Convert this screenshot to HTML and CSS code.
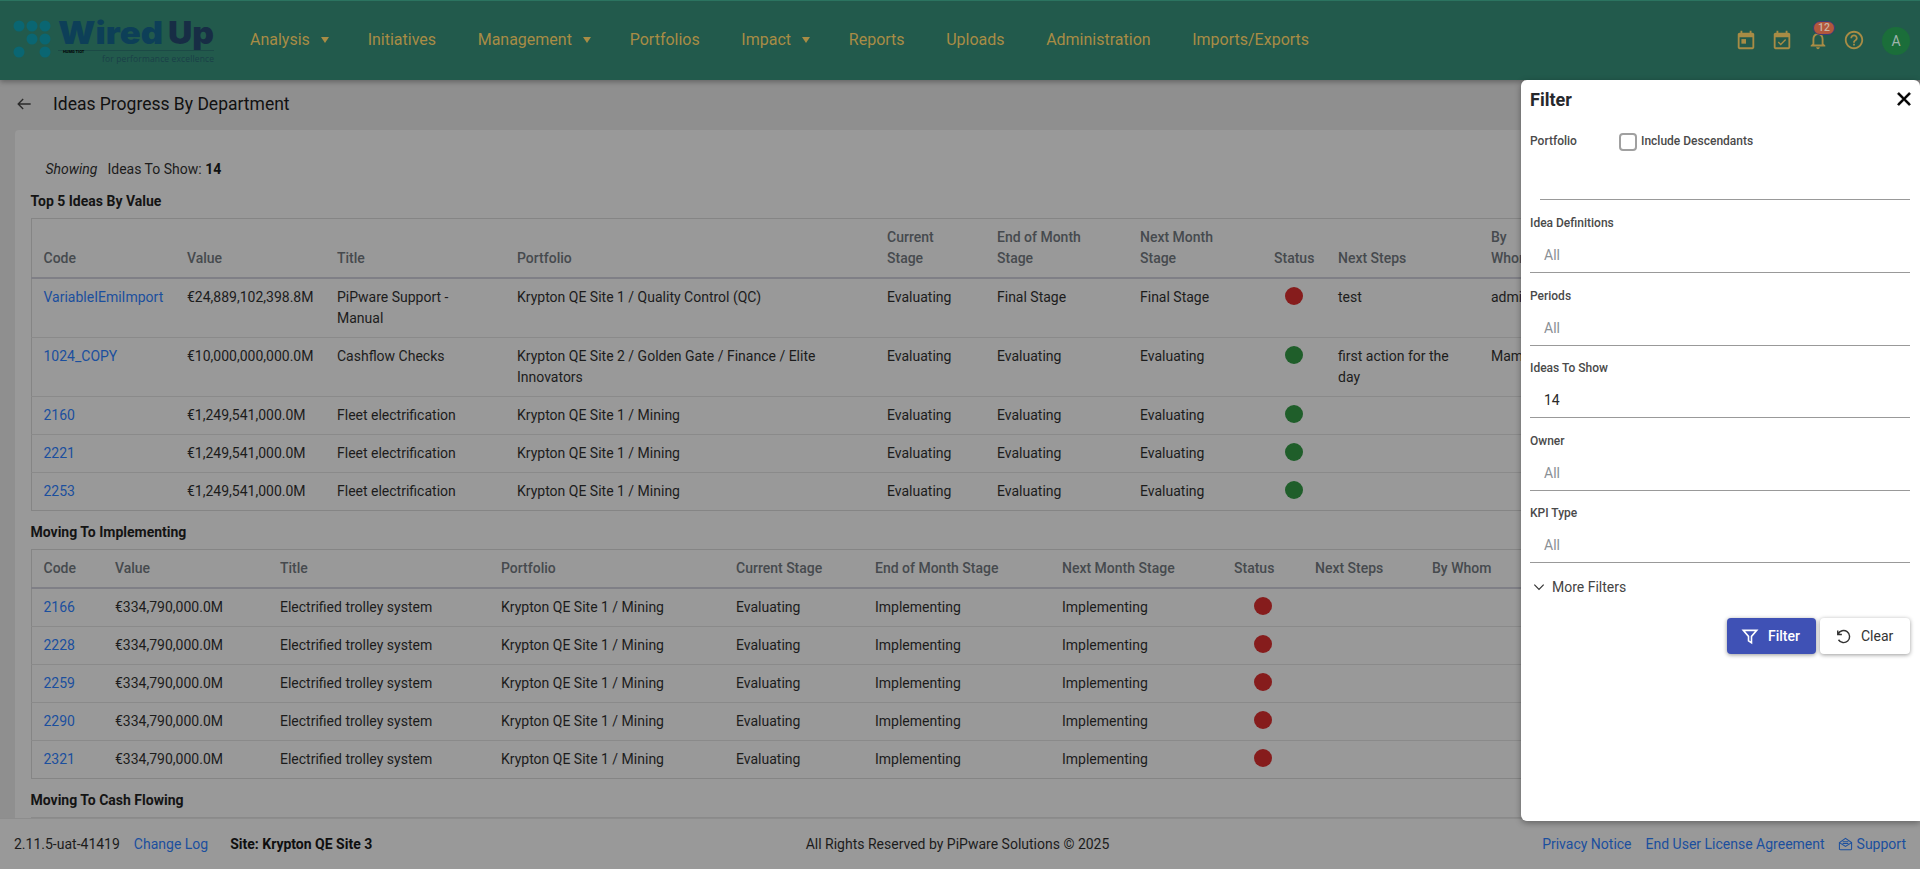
FILE: index.html
```html
<!DOCTYPE html>
<html lang="en">
<head>
<meta charset="utf-8">
<title>Ideas Progress By Department</title>
<link rel="stylesheet" href="styles.css">
</head>
<body>
<header class="topbar">
  <svg class="logo" width="229" height="80" viewBox="0 0 229 80" aria-label="WiredUp">
    <g class="logo-dots">
      <circle cx="19" cy="26" r="5.5"/><circle cx="32" cy="26" r="5.5"/><circle cx="45" cy="26" r="5.5"/>
      <circle cx="32" cy="39" r="5.5"/><circle cx="45" cy="39" r="5.5"/>
      <circle cx="19" cy="52" r="5.5"/><circle cx="45" cy="52" r="5.5"/>
    </g>
    <text class="logo-wired" x="58" y="44" textLength="105" lengthAdjust="spacingAndGlyphs">Wired</text>
    <text class="logo-up" x="168" y="44" textLength="46" lengthAdjust="spacingAndGlyphs">Up</text>
    <rect class="logo-rule" x="58" y="50" width="156" height="1"/>
    <text class="logo-micro" x="63" y="53">HUMG TIOT</text>
    <text class="logo-tag" x="102" y="62" textLength="112">for performance excellence</text>
  </svg>
  <nav class="nav">
    <a class="nav-item has-menu">Analysis<i class="caret"></i></a>
    <a class="nav-item">Initiatives</a>
    <a class="nav-item has-menu">Management<i class="caret"></i></a>
    <a class="nav-item">Portfolios</a>
    <a class="nav-item has-menu">Impact<i class="caret"></i></a>
    <a class="nav-item">Reports</a>
    <a class="nav-item">Uploads</a>
    <a class="nav-item">Administration</a>
    <a class="nav-item">Imports/Exports</a>
  </nav>
  <div class="tools">
    <svg class="tool" viewBox="0 0 24 24"><path d="M19 4h-1V2h-2v2H8V2H6v2H5C3.9 4 3 4.9 3 6v14c0 1.1.9 2 2 2h14c1.1 0 2-.9 2-2V6c0-1.1-.9-2-2-2zm0 16H5V9h14v11z"/><rect x="7" y="11" width="5" height="5"/></svg>
    <svg class="tool" viewBox="0 0 24 24"><path d="M16.53 12.06L15.47 11l-4.88 4.88-2.12-2.12-1.06 1.06L10.59 18l5.94-5.94zM19 4h-1V2h-2v2H8V2H6v2H5C3.9 4 3 4.9 3 6v14c0 1.1.9 2 2 2h14c1.1 0 2-.9 2-2V6c0-1.1-.9-2-2-2zm0 16H5V9h14v11z"/></svg>
    <span class="bell">
      <svg class="tool" viewBox="0 0 24 24"><path d="M12 22c1.1 0 2-.9 2-2h-4c0 1.1.9 2 2 2zm6-6v-5c0-3.07-1.63-5.64-4.5-6.32V4c0-.83-.67-1.5-1.5-1.5s-1.5.67-1.5 1.5v.68C7.64 5.36 6 7.92 6 11v5l-2 2v1h16v-1l-2-2zm-2 1H8v-6c0-2.48 1.51-4.5 4-4.5s4 2.02 4 4.5v6z"/></svg>
      <b class="badge">12</b>
    </span>
    <svg class="tool" viewBox="0 0 24 24"><path d="M11 18h2v-2h-2v2zm1-16C6.48 2 2 6.48 2 12s4.48 10 10 10 10-4.48 10-10S17.52 2 12 2zm0 18c-4.41 0-8-3.59-8-8s3.59-8 8-8 8 3.59 8 8-3.59 8-8 8zm0-14c-2.21 0-4 1.79-4 4h2c0-1.1.9-2 2-2s2 .9 2 2c0 2-3 1.75-3 5h2c0-2.25 3-2.5 3-5 0-2.21-1.79-4-4-4z"/></svg>
    <span class="avatar">A</span>
  </div>
</header>

<main class="main">
  <div class="page-head">
    <svg class="back" viewBox="0 0 24 24"><path d="M20 12H5M11 6l-6 6 6 6"/></svg>
    <h1 class="page-title">Ideas Progress By Department</h1>
  </div>
  <section class="card">
    <p class="showing"><em>Showing</em><span>Ideas To Show: <b>14</b></span></p>

    <h2 class="section-title">Top 5 Ideas By Value</h2>
    <table class="grid">
      <colgroup><col class="a1"><col class="a2"><col class="a3"><col class="a4"><col class="a5"><col class="a6"><col class="a7"><col class="a8"><col class="a9"><col class="a10"><col></colgroup>
      <thead><tr><th>Code</th><th>Value</th><th>Title</th><th>Portfolio</th><th>Current Stage</th><th>End of Month Stage</th><th>Next Month Stage</th><th>Status</th><th>Next Steps</th><th>By Whom</th><th></th></tr></thead>
      <tbody>
        <tr><td><a>VariableIEmiImport</a></td><td>€24,889,102,398.8M</td><td>PiPware Support - Manual</td><td>Krypton QE Site 1 / Quality Control (QC)</td><td>Evaluating</td><td>Final Stage</td><td>Final Stage</td><td><i class="dot red"></i></td><td>test</td><td>admin</td><td></td></tr>
        <tr><td><a>1024_COPY</a></td><td>€10,000,000,000.0M</td><td>Cashflow Checks</td><td>Krypton QE Site 2 / Golden Gate / Finance / Elite Innovators</td><td>Evaluating</td><td>Evaluating</td><td>Evaluating</td><td><i class="dot green"></i></td><td>first action for the day</td><td>Mamta</td><td></td></tr>
        <tr><td><a>2160</a></td><td>€1,249,541,000.0M</td><td>Fleet electrification</td><td>Krypton QE Site 1 / Mining</td><td>Evaluating</td><td>Evaluating</td><td>Evaluating</td><td><i class="dot green"></i></td><td></td><td></td><td></td></tr>
        <tr><td><a>2221</a></td><td>€1,249,541,000.0M</td><td>Fleet electrification</td><td>Krypton QE Site 1 / Mining</td><td>Evaluating</td><td>Evaluating</td><td>Evaluating</td><td><i class="dot green"></i></td><td></td><td></td><td></td></tr>
        <tr><td><a>2253</a></td><td>€1,249,541,000.0M</td><td>Fleet electrification</td><td>Krypton QE Site 1 / Mining</td><td>Evaluating</td><td>Evaluating</td><td>Evaluating</td><td><i class="dot green"></i></td><td></td><td></td><td></td></tr>
      </tbody>
    </table>

    <h2 class="section-title">Moving To Implementing</h2>
    <table class="grid">
      <colgroup><col class="b1"><col class="b2"><col class="b3"><col class="b4"><col class="b5"><col class="b6"><col class="b7"><col class="b8"><col class="b9"><col></colgroup>
      <thead><tr><th>Code</th><th>Value</th><th>Title</th><th>Portfolio</th><th>Current Stage</th><th>End of Month Stage</th><th>Next Month Stage</th><th>Status</th><th>Next Steps</th><th>By Whom</th></tr></thead>
      <tbody>
        <tr><td><a>2166</a></td><td>€334,790,000.0M</td><td>Electrified trolley system</td><td>Krypton QE Site 1 / Mining</td><td>Evaluating</td><td>Implementing</td><td>Implementing</td><td><i class="dot red"></i></td><td></td><td></td></tr>
        <tr><td><a>2228</a></td><td>€334,790,000.0M</td><td>Electrified trolley system</td><td>Krypton QE Site 1 / Mining</td><td>Evaluating</td><td>Implementing</td><td>Implementing</td><td><i class="dot red"></i></td><td></td><td></td></tr>
        <tr><td><a>2259</a></td><td>€334,790,000.0M</td><td>Electrified trolley system</td><td>Krypton QE Site 1 / Mining</td><td>Evaluating</td><td>Implementing</td><td>Implementing</td><td><i class="dot red"></i></td><td></td><td></td></tr>
        <tr><td><a>2290</a></td><td>€334,790,000.0M</td><td>Electrified trolley system</td><td>Krypton QE Site 1 / Mining</td><td>Evaluating</td><td>Implementing</td><td>Implementing</td><td><i class="dot red"></i></td><td></td><td></td></tr>
        <tr><td><a>2321</a></td><td>€334,790,000.0M</td><td>Electrified trolley system</td><td>Krypton QE Site 1 / Mining</td><td>Evaluating</td><td>Implementing</td><td>Implementing</td><td><i class="dot red"></i></td><td></td><td></td></tr>
      </tbody>
    </table>

    <h2 class="section-title">Moving To Cash Flowing</h2>
    <table class="grid"><tbody><tr><td>&nbsp;</td></tr></tbody></table>
  </section>
</main>

<footer class="footer">
  <div class="foot-left"><span>2.11.5-uat-41419</span><a>Change Log</a><b>Site: Krypton QE Site 3</b></div>
  <div class="foot-center">All Rights Reserved by PiPware Solutions © 2025</div>
  <div class="foot-right">
    <a>Privacy Notice</a><a>End User License Agreement</a>
    <a class="support"><svg viewBox="0 0 16 16"><path d="M1.500 6.500 8 2l6.500 4.500V13a1.200 1.200 0 0 1-1.200 1.200H2.700A1.200 1.200 0 0 1 1.500 13zM1.500 6.500 8 10.500l6.500-4M5 5.500h6M5 7.500h6"/></svg>Support</a>
  </div>
</footer>

<aside class="drawer">
  <div class="drawer-head">
    <h2 class="drawer-title">Filter</h2>
    <svg class="close" viewBox="0 0 24 24"><path d="M19 6.410 17.590 5 12 10.590 6.410 5 5 6.410 10.590 12 5 17.590 6.410 19 12 13.410 17.590 19 19 17.590 13.410 12z"/></svg>
  </div>
  <div class="portfolio-row">
    <label class="field-label">Portfolio</label>
    <span class="check"><i class="box"></i>Include Descendants</span>
  </div>
  <div class="portfolio-input"></div>
  <div class="field"><label class="field-label">Idea Definitions</label><div class="field-value">All</div></div>
  <div class="field"><label class="field-label">Periods</label><div class="field-value">All</div></div>
  <div class="field"><label class="field-label">Ideas To Show</label><div class="field-value filled">14</div></div>
  <div class="field"><label class="field-label">Owner</label><div class="field-value">All</div></div>
  <div class="field"><label class="field-label">KPI Type</label><div class="field-value">All</div></div>
  <div class="more"><svg viewBox="0 0 24 24"><path d="M5 8.500l7 7 7-7"/></svg>More Filters</div>
  <div class="actions">
    <button class="btn primary"><svg viewBox="0 0 24 24"><path d="M3 4.500h18l-7 8V21l-4-2.500v-6z"/></svg>Filter</button>
    <button class="btn"><svg viewBox="0 0 24 24"><path d="M5.500 9.500A8 8 0 1 1 6 17M5 4.500v5.500h5.500"/></svg>Clear</button>
  </div>
</aside>
</body>
</html>
```
FILE: styles.css
```css
* { box-sizing: border-box; }
html, body { height: 100%; }
body {
  margin: 0;
  height: 869px;
  overflow: hidden;
  display: flex;
  flex-direction: column;
  font: 14px/21px Roboto, "Liberation Sans", sans-serif;
  color: #1c1c1c;
  background: #8f8f8f;
}
a { color: #1b4f9e; }

/* top bar */
.topbar {
  flex: none;
  height: 80px;
  display: flex;
  align-items: center;
  background: #225a4c;
  border-top: 1px solid #2b7460;
  box-shadow: 0 2px 5px rgba(0,0,0,.3);
  position: relative;
  z-index: 2;
}
.logo { flex: none; margin-top: -1px; }
.logo-dots { fill: #0a6672; }
.logo-wired { font: 900 31px Inter, Roboto, sans-serif; fill: #0d3f58; }
.logo-up { font: 900 31px Inter, Roboto, sans-serif; fill: #172d45; }
.logo-rule { fill: #1c4a46; }
.logo-micro { font: 700 4px Roboto, sans-serif; fill: #000; }
.logo-tag { font: 400 8.500px "Open Sans", Roboto, sans-serif; fill: #1a4048; }
.nav { display: flex; align-items: center; margin-bottom: 2px; }
.nav-item {
  display: flex;
  align-items: center;
  padding: 0 20.800px;
  font-size: 16px;
  color: #a88c45;
}
.nav-item:first-child { padding-left: 21px; }
.nav-item.has-menu { padding-right: 18px; }
.caret {
  width: 0;
  height: 0;
  margin-left: 11px;
  border-left: 4.500px solid transparent;
  border-right: 4.500px solid transparent;
  border-top: 6px solid #a88c45;
}
.tools { margin-left: auto; margin-right: 10px; display: flex; align-items: center; gap: 14px; }
.tool { display: block; width: 22px; height: 22px; fill: #a88c45; margin-bottom: 2px; }
.bell { position: relative; display: block; }
.badge {
  position: absolute;
  left: 6px;
  top: -8px;
  width: 22px;
  height: 14px;
  border: 1px solid #3d3a78;
  border-radius: 7px;
  background: #b3573c;
  color: #c9b5a5;
  font: 500 10.500px/12px Roboto, sans-serif;
  text-align: center;
}
.avatar {
  width: 28px;
  height: 28px;
  margin-left: 3px;
  border-radius: 50%;
  background: #1b6e3a;
  color: #9fb3ad;
  font-size: 14px;
  line-height: 28px;
  text-align: center;
}

/* main */
.main { flex: 1; min-height: 0; overflow: hidden; padding: 0 15px; }
.page-head { height: 50px; padding-bottom: 2px; display: flex; align-items: center; }
.back { width: 20px; height: 20px; margin-left: -1px; fill: none; stroke: #2a2a2a; stroke-width: 1.600; }
.page-title { margin: 0 0 0 19px; font-size: 17.500px; font-weight: 400; color: #111; }
.card { background: #999; border-radius: 4px; padding: 29px 16px 16px 15.500px; min-height: 800px; }
.showing { margin: 0; padding-left: 15px; height: 21px; display: flex; gap: 10px; }
.showing b { font-weight: 700; color: #111; }
.section-title { margin: 11px 0 6px; font-size: 14px; font-weight: 700; line-height: 21px; color: #141414; }
.grid { width: 100%; table-layout: fixed; border-collapse: collapse; border: 1px solid #858585; }
.grid th {
  padding: 8px 12px;
  text-align: left;
  vertical-align: bottom;
  font-weight: 500;
  color: #464a4e;
  border-bottom: 2px solid #7f7f86;
}
.grid td { padding: 8px 12px; vertical-align: top; border-top: 1px solid #8a8a8a; }
.dot { display: block; width: 18px; height: 18px; margin: 0 auto; border-radius: 50%; }
.dot.red { background: #861c1c; }
.dot.green { background: #1f5e2a; }
.a1 { width: 144px; } .a2 { width: 150px; } .a3 { width: 180px; } .a4 { width: 370px; }
.a5 { width: 110px; } .a6 { width: 143px; } .a7 { width: 134px; } .a8 { width: 64px; }
.a9 { width: 153px; } .a10 { width: 70px; }
.b1 { width: 72px; } .b2 { width: 165px; } .b3 { width: 221px; } .b4 { width: 235px; }
.b5 { width: 139px; } .b6 { width: 187px; } .b7 { width: 172px; } .b8 { width: 81px; }
.b9 { width: 117px; }

/* footer */
.footer {
  flex: none;
  height: 51px;
  padding: 0 14px;
  display: grid;
  grid-template-columns: 1fr auto 1fr;
  align-items: center;
  background: #999;
  border-top: 1px solid #8d8d8d;
  position: relative;
}
.foot-left { display: flex; gap: 14px; }
.foot-left b { margin-left: 8px; font-weight: 700; color: #0f0f0f; }
.foot-center { margin-right: 5px; }
.foot-right { display: flex; justify-content: flex-end; gap: 14px; }
.support { display: flex; align-items: center; gap: 4px; margin-left: -1px; }
.support svg { width: 15px; height: 16px; fill: none; stroke: #1b4f9e; stroke-width: 1.100; }

/* drawer */
.drawer {
  position: absolute;
  left: 1521px;
  top: 80px;
  width: 399px;
  height: 741px;
  padding: 0 10px 0 9px;
  background: #fff;
  border-radius: 6px 6px 0 6px;
  box-shadow: 0 2px 6px rgba(0,0,0,.35);
  z-index: 3;
}
.drawer-head { height: 38px; display: flex; justify-content: space-between; align-items: center; color: #26282c; }
.drawer-title { margin: 0; font-size: 18px; font-weight: 700; }
.close { width: 22px; height: 22px; margin-right: -5px; stroke: #000; stroke-width: 1; }
.portfolio-row { margin-top: 13px; height: 21px; display: flex; align-items: center; }
.field-label { display: block; font-size: 12px; font-weight: 500; line-height: 21px; color: #4a4a4a; }
.portfolio-row .field-label { width: 89px; }
.check { display: flex; align-items: center; gap: 4px; font-size: 12px; font-weight: 500; color: #4a4a4a; }
.box { width: 18px; height: 18px; border: 2px solid #a0a0a0; border-radius: 4px; }
.portfolio-input { margin: 0 0 0 10px; height: 48px; border-bottom: 1px solid #999; }
.field { height: 72.500px; padding-top: 13px; }
.field-value {
  height: 39px;
  padding: 11px 14px 0;
  border-bottom: 1px solid #999;
  line-height: 21px;
  color: #8a9096;
}
.field-value.filled { color: #2a2a2a; }
.more { margin-top: 13.500px; height: 22px; display: flex; align-items: center; gap: 5px; color: #444; padding-left: 1px; }
.more svg { width: 16px; height: 16px; fill: none; stroke: #333; stroke-width: 1.800; }
.actions { margin-top: 20px; display: flex; justify-content: flex-end; gap: 4px; }
.btn {
  height: 36px;
  padding: 0 14px 0 15px;
  display: flex;
  align-items: center;
  gap: 9px;
  border: 0;
  border-radius: 4px;
  background: #fff;
  color: #333;
  font: 400 14px Roboto, sans-serif;
  box-shadow: 0 1px 4px rgba(0,0,0,.4);
}
.btn + .btn { width: 90px; padding-left: 14px; }
.btn.primary { width: 89px; padding-left: 14px; background: #3f51b5; color: #fff; font-weight: 500; }
.btn svg { width: 18px; height: 18px; fill: none; stroke: #333; stroke-width: 1.900; }
.btn.primary svg { stroke: #fff; stroke-width: 2.100; }
```
